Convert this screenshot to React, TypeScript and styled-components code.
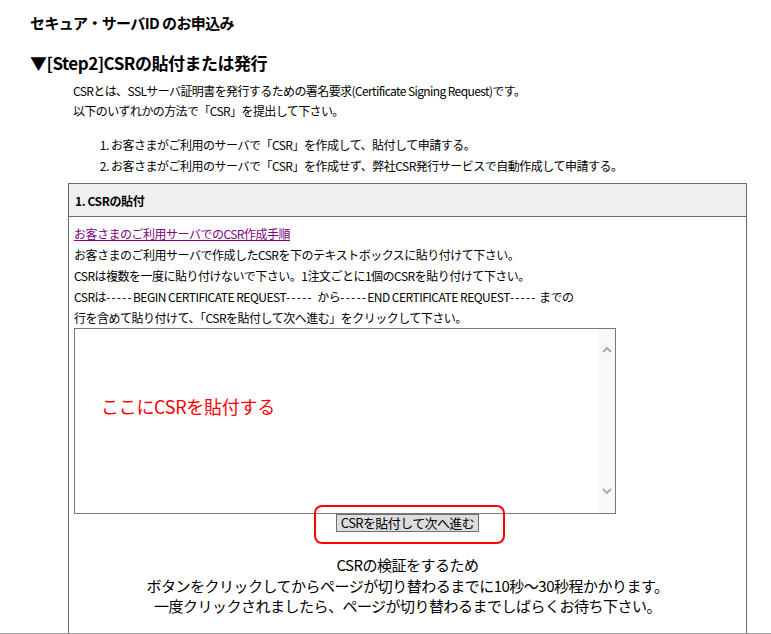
import styled, { createGlobalStyle } from "styled-components";

const GlobalStyle = createGlobalStyle`
  html, body {
    margin: 0;
    padding: 0;
    background: #ffffff;
  }
  body {
    font-family: "Noto Sans CJK JP", "Liberation Sans", sans-serif;
    color: #000000;
  }
`;

const Page = styled.div`
  box-sizing: border-box;
  height: 634px;
  overflow: hidden;
  padding: 13px 24px 0 30px;
  border-bottom: 1px solid #a0a0a0;
`;

const Title = styled.h1`
  margin: 0;
  font-size: 15px;
  line-height: 20px;
  font-weight: bold;
  letter-spacing: -0.6px;
`;

const StepHeading = styled.h2`
  margin: 19px 0 0;
  font-size: 17px;
  line-height: 22px;
  font-weight: bold;
  letter-spacing: -0.5px;
`;

const Intro = styled.div`
  margin: 7px 0 0 43px;
  font-size: 12px;
  line-height: 20px;
  letter-spacing: -0.6px;
`;

const Methods = styled.ol`
  margin: 13px 0 0 43px;
  padding-left: 38px;
  font-size: 12px;
  line-height: 21px;
  letter-spacing: -0.5px;
`;

const Panel = styled.div`
  margin: 7px 0 0 38px;
  border: 1px solid #6b6b6b;
`;

const PanelHeader = styled.div`
  height: 32px;
  display: flex;
  align-items: center;
  padding-left: 6px;
  background: #efefef;
  border-bottom: 1px solid #6b6b6b;
  font-size: 12px;
  font-weight: bold;
  letter-spacing: -0.4px;
`;

const PanelBody = styled.div`
  padding: 6px 5px 60px 5px;
  font-size: 12px;
  line-height: 21px;
  letter-spacing: -0.5px;
`;

const GuideLink = styled.a`
  color: #800080;
  text-decoration: underline;
`;

const Dashes = styled.span`
  letter-spacing: 1.2px;
`;

const CsrBox = styled.div`
  position: relative;
  box-sizing: border-box;
  width: 542px;
  height: 186px;
  display: flex;
  border: 1px solid #7a7a7a;
`;

const CsrInput = styled.textarea`
  flex: 1;
  border: none;
  outline: none;
  resize: none;
  overflow: hidden;
  padding: 2px;
  font-family: inherit;
  font-size: 12px;
`;

const ScrollTrack = styled.div`
  width: 16px;
  background: #f8f8f8;
  display: flex;
  flex-direction: column;
  justify-content: space-between;
  align-items: center;
  padding: 17px 0 18px;
`;

const Hint = styled.div`
  position: absolute;
  left: 26px;
  top: 65px;
  color: #ff0000;
  font-size: 18px;
  line-height: 24px;
  letter-spacing: -0.3px;
  pointer-events: none;
`;

const ButtonRow = styled.div`
  display: flex;
  justify-content: center;
`;

const ButtonFrame = styled.div`
  position: relative;
  display: flex;
`;

const Highlight = styled.div`
  position: absolute;
  left: -22px;
  right: -26px;
  top: -9px;
  bottom: -12px;
  border: 2px solid #ff0000;
  border-radius: 8px;
  pointer-events: none;
`;

const SubmitButton = styled.button`
  box-sizing: border-box;
  height: 18px;
  width: 143px;
  padding: 0;
  background: #dddddd;
  border: 1px solid #707070;
  font-family: inherit;
  font-size: 13px;
  line-height: 16px;
  letter-spacing: -0.6px;
  white-space: nowrap;
  overflow: hidden;
  color: #000000;
`;

const Notice = styled.div`
  margin-top: 23px;
  text-align: center;
  font-size: 15px;
  line-height: 20.5px;
  letter-spacing: -0.5px;
`;

const Chevron = ({ up }: { up: boolean }) => (
  <svg width="10" height="7" viewBox="0 0 10 7">
    <path
      d={up ? "M1 6 L5 2 L9 6" : "M1 1 L5 5 L9 1"}
      fill="none"
      stroke="#a6a6a6"
      strokeWidth="1.8"
    />
  </svg>
);

export default function App() {
  return (
    <>
      <GlobalStyle />
      <Page>
        <Title>セキュア・サーバID のお申込み</Title>
        <StepHeading>▼[Step2]CSRの貼付または発行</StepHeading>
        <Intro>
          CSRとは、SSLサーバ証明書を発行するための署名要求(Certificate Signing Request)です。
          <br />
          以下のいずれかの方法で「CSR」を提出して下さい。
        </Intro>
        <Methods>
          <li>お客さまがご利用のサーバで「CSR」を作成して、貼付して申請する。</li>
          <li>お客さまがご利用のサーバで「CSR」を作成せず、弊社CSR発行サービスで自動作成して申請する。</li>
        </Methods>
        <Panel>
          <PanelHeader>1. CSRの貼付</PanelHeader>
          <PanelBody>
            <GuideLink href="#">お客さまのご利用サーバでのCSR作成手順</GuideLink>
            <br />
            お客さまのご利用サーバで作成したCSRを下のテキストボックスに貼り付けて下さい。
            <br />
            CSRは複数を一度に貼り付けないで下さい。1注文ごとに1個のCSRを貼り付けて下さい。
            <br />
            CSRは<Dashes>-----</Dashes>BEGIN CERTIFICATE REQUEST<Dashes>-----</Dashes> &nbsp;から
            <Dashes>-----</Dashes>END CERTIFICATE REQUEST<Dashes>-----</Dashes> までの
            <br />
            行を含めて貼り付けて、「CSRを貼付して次へ進む」をクリックして下さい。
            <CsrBox>
              <CsrInput aria-label="CSR" />
              <ScrollTrack>
                <Chevron up />
                <Chevron up={false} />
              </ScrollTrack>
              <Hint>ここにCSRを貼付する</Hint>
            </CsrBox>
            <ButtonRow>
              <ButtonFrame>
                <SubmitButton type="button">CSRを貼付して次へ進む</SubmitButton>
                <Highlight />
              </ButtonFrame>
            </ButtonRow>
            <Notice>
              CSRの検証をするため
              <br />
              ボタンをクリックしてからページが切り替わるまでに10秒～30秒程かかります。
              <br />
              一度クリックされましたら、ページが切り替わるまでしばらくお待ち下さい。
            </Notice>
          </PanelBody>
        </Panel>
      </Page>
    </>
  );
}
